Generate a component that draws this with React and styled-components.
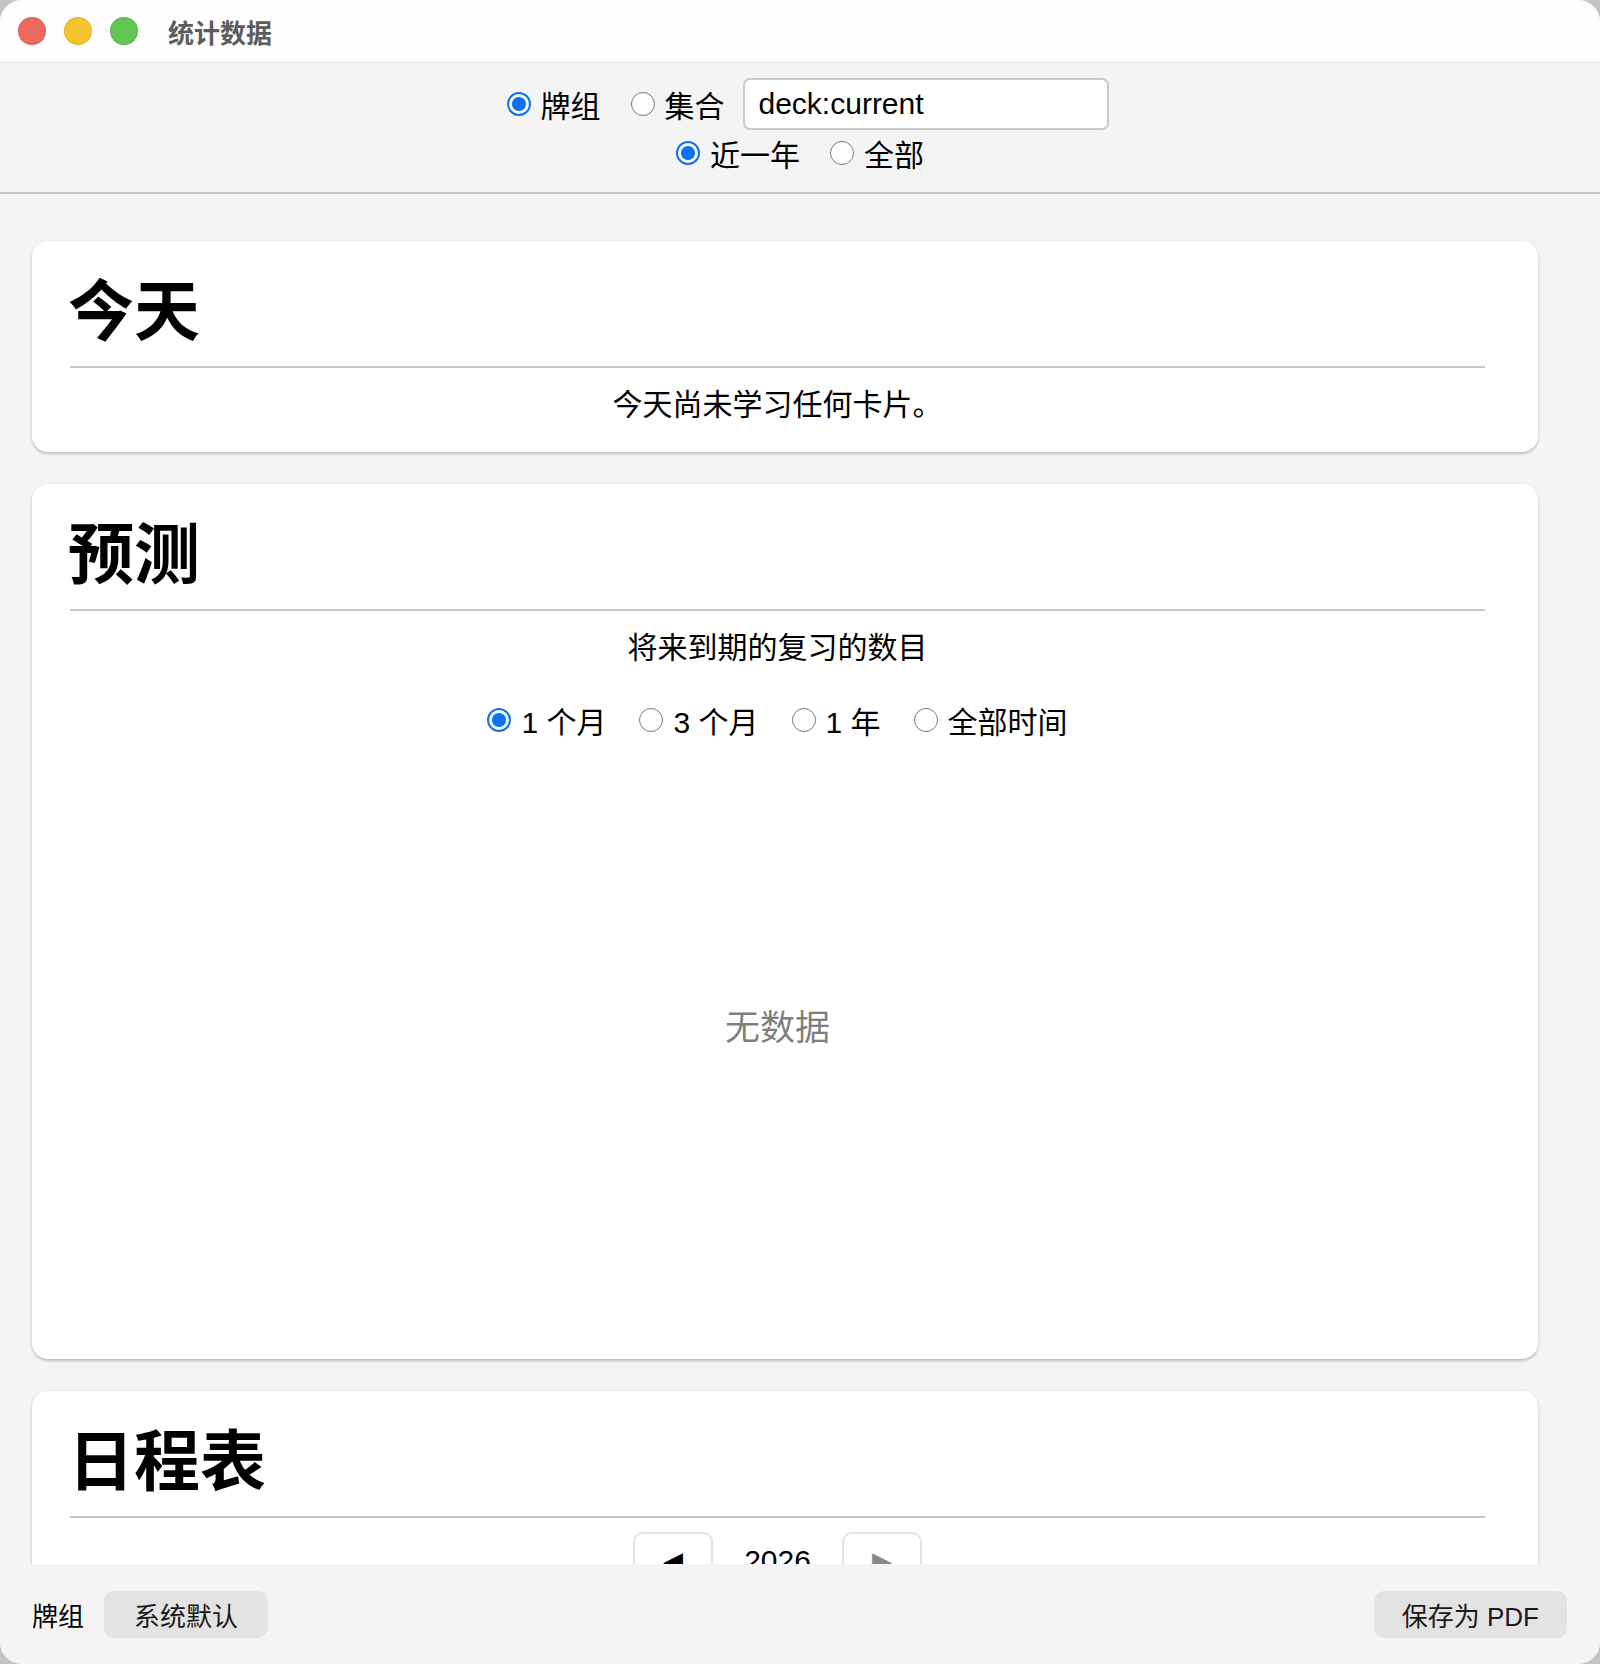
import React, { useState } from "react";
import styled, { createGlobalStyle } from "styled-components";

const GlobalStyle = createGlobalStyle`
  html, body {
    margin: 0;
    padding: 0;
    background: #c4c4c4;
  }
  body {
    font-family: "Liberation Sans", "Noto Sans CJK SC", sans-serif;
    color: #000;
  }
`;

const Window = styled.div`
  width: 1600px;
  height: 1664px;
  display: flex;
  flex-direction: column;
  background: #f4f4f4;
  border-radius: 22px;
  overflow: hidden;
`;

const TitleBar = styled.div`
  height: 62px;
  flex-shrink: 0;
  display: flex;
  align-items: center;
  padding-left: 18px;
  background: #fdfdfd;
  border-bottom: 1px solid #e2e2e2;
`;

const Light = styled.span`
  width: 28px;
  height: 28px;
  border-radius: 50%;
  background: ${(p) => p.$color};
  margin-right: 18px;
  box-shadow: inset 0 0 0 1px rgba(0, 0, 0, 0.08);
`;

const Title = styled.div`
  margin-left: 12px;
  font-family: "Noto Sans CJK SC", sans-serif;
  font-weight: 700;
  font-size: 26px;
  color: #5c5c5c;
`;

const Toolbar = styled.div`
  flex-shrink: 0;
  height: 131px;
  display: flex;
  flex-direction: column;
  align-items: center;
  justify-content: center;
  padding-bottom: 1px;
  box-sizing: border-box;
  border-bottom: 2px solid #c6c6c6;
  background: #f4f4f4;
`;

const Row = styled.div`
  display: flex;
  align-items: center;
  justify-content: center;
  gap: ${(p) => p.$gap || 32}px;
  height: ${(p) => p.$height || 48}px;
  margin-left: ${(p) => p.$shift || 0}px;
`;

const RadioLabel = styled.label`
  display: flex;
  align-items: center;
  gap: ${(p) => p.$gap || 8}px;
  font-size: ${(p) => p.$size || 30}px;
  white-space: nowrap;
  cursor: pointer;
`;

const RadioInput = styled.input.attrs({ type: "radio" })`
  appearance: none;
  margin: 0;
  width: 24px;
  height: 24px;
  border-radius: 50%;
  border: 1.5px solid #7a7a7a;
  background: #fff;
  flex-shrink: 0;

  &:checked {
    border: 2.5px solid #0c72f5;
    background: radial-gradient(circle, #0c72f5 0 6.5px, #fff 7.5px);
  }
`;

const SearchInput = styled.input`
  width: 366px;
  height: 52px;
  box-sizing: border-box;
  border: 2px solid #cacaca;
  border-radius: 7px;
  background: #fff;
  padding: 0 14px;
  font-family: "Liberation Sans", "Noto Sans CJK SC", sans-serif;
  font-size: 30px;
  color: #000;
  outline: none;
`;

const Main = styled.div`
  flex: 1;
  overflow: hidden;
  padding: 47px 62px 0 32px;
  display: flex;
  flex-direction: column;
  gap: 32px;
`;

const Card = styled.section`
  flex-shrink: 0;
  background: #fff;
  border-radius: 16px;
  padding: 26px 53px 0 38px;
  box-shadow: 0 2px 3px rgba(0, 0, 0, 0.2), 0 0 4px rgba(0, 0, 0, 0.06);
  min-height: ${(p) => p.$minHeight || 0}px;
  box-sizing: border-box;
`;

const Heading = styled.h1`
  margin: 0;
  text-indent: -2px;
  font-family: "Noto Sans CJK SC", sans-serif;
  font-weight: 700;
  font-size: 66px;
  line-height: 78px;
  padding-bottom: 21px;
  border-bottom: 2px solid #c8c8c8;
`;

const Subtitle = styled.div`
  text-align: center;
  font-size: 30px;
  line-height: 40px;
  margin-top: 17px;
  padding-bottom: ${(p) => p.$bottom || 0}px;
`;

const RangeRow = styled(Row)`
  margin-top: 32px;
  height: 40px;
  gap: 33px;
`;

const ChartArea = styled.div`
  height: 548px;
  margin-top: 10px;
  display: flex;
  align-items: center;
  justify-content: center;
  font-size: 35px;
  color: #7f7f7f;
`;

const YearNav = styled.div`
  display: flex;
  justify-content: center;
  align-items: center;
  gap: 31px;
  margin-top: 14px;
  padding-bottom: 40px;
`;

const NavButton = styled.button`
  width: 80px;
  height: 58px;
  box-sizing: border-box;
  background: #fff;
  border: 2px solid #e2e2e2;
  border-radius: 10px;
  font-size: 26px;
  color: ${(p) => (p.disabled ? "#8a8a8a" : "#000")};
  display: flex;
  align-items: center;
  justify-content: center;
  padding: 0;
`;

const Year = styled.span`
  font-size: 30px;
  line-height: 58px;
`;

const BottomBar = styled.div`
  flex-shrink: 0;
  height: 100px;
  display: flex;
  align-items: center;
  padding: 0 33px 0 32px;
  background: #f4f4f4;
  font-size: 26px;
  position: relative;
  z-index: 1;
`;

const BarLabel = styled.span`
  font-family: "Noto Sans CJK SC", sans-serif;
  margin-right: 20px;
`;

const BarButton = styled.button`
  height: 47px;
  padding: 0 ${(p) => p.$pad || 30}px;
  border: none;
  border-radius: 10px;
  background: #e3e3e3;
  font-family: "Liberation Sans", "Noto Sans CJK SC", sans-serif;
  font-size: 26px;
  color: #1a1a1a;
  margin-left: ${(p) => (p.$push ? "auto" : "0")};
`;

const Radio = ({ name, checked, onChange, children, gap, size }) => (
  <RadioLabel $gap={gap} $size={size}>
    <RadioInput name={name} checked={checked} onChange={onChange} />
    {children}
  </RadioLabel>
);

const App = () => {
  const [scope, setScope] = useState("deck");
  const [period, setPeriod] = useState("year");
  const [range, setRange] = useState("1m");

  const ranges = [
    ["1m", "1 个月"],
    ["3m", "3 个月"],
    ["1y", "1 年"],
    ["all", "全部时间"],
  ];

  return (
    <>
      <GlobalStyle />
      <Window>
        <TitleBar>
          <Light $color="#ec6a5f" />
          <Light $color="#f3c42f" />
          <Light $color="#62c554" />
          <Title>统计数据</Title>
        </TitleBar>

        <Toolbar>
          <Row $gap={30} $height={52} $shift={15}>
            <Radio name="scope" checked={scope === "deck"} onChange={() => setScope("deck")} gap={10}>
              牌组
            </Radio>
            <Radio name="scope" checked={scope === "col"} onChange={() => setScope("col")} gap={10}>
              集合
            </Radio>
            <SearchInput defaultValue="deck:current" style={{ marginLeft: -12 }} />
          </Row>
          <Row $gap={30} $height={46}>
            <Radio name="period" checked={period === "year"} onChange={() => setPeriod("year")} gap={10}>
              近一年
            </Radio>
            <Radio name="period" checked={period === "all"} onChange={() => setPeriod("all")} gap={10}>
              全部
            </Radio>
          </Row>
        </Toolbar>

        <Main>
          <Card>
            <Heading>今天</Heading>
            <Subtitle $bottom={27}>今天尚未学习任何卡片。</Subtitle>
          </Card>

          <Card $minHeight={875}>
            <Heading>预测</Heading>
            <Subtitle>将来到期的复习的数目</Subtitle>
            <RangeRow>
              {ranges.map(([key, label]) => (
                <Radio
                  key={key}
                  name="range"
                  checked={range === key}
                  onChange={() => setRange(key)}
                  gap={10}
                >
                  {label}
                </Radio>
              ))}
            </RangeRow>
            <ChartArea>无数据</ChartArea>
          </Card>

          <Card>
            <Heading>日程表</Heading>
            <YearNav>
              <NavButton>◀</NavButton>
              <Year>2026</Year>
              <NavButton disabled>▶</NavButton>
            </YearNav>
          </Card>
        </Main>

        <BottomBar>
          <BarLabel>牌组</BarLabel>
          <BarButton $pad={30}>系统默认</BarButton>
          <BarButton $push $pad={28}>
            保存为 PDF
          </BarButton>
        </BottomBar>
      </Window>
    </>
  );
};

export default App;
